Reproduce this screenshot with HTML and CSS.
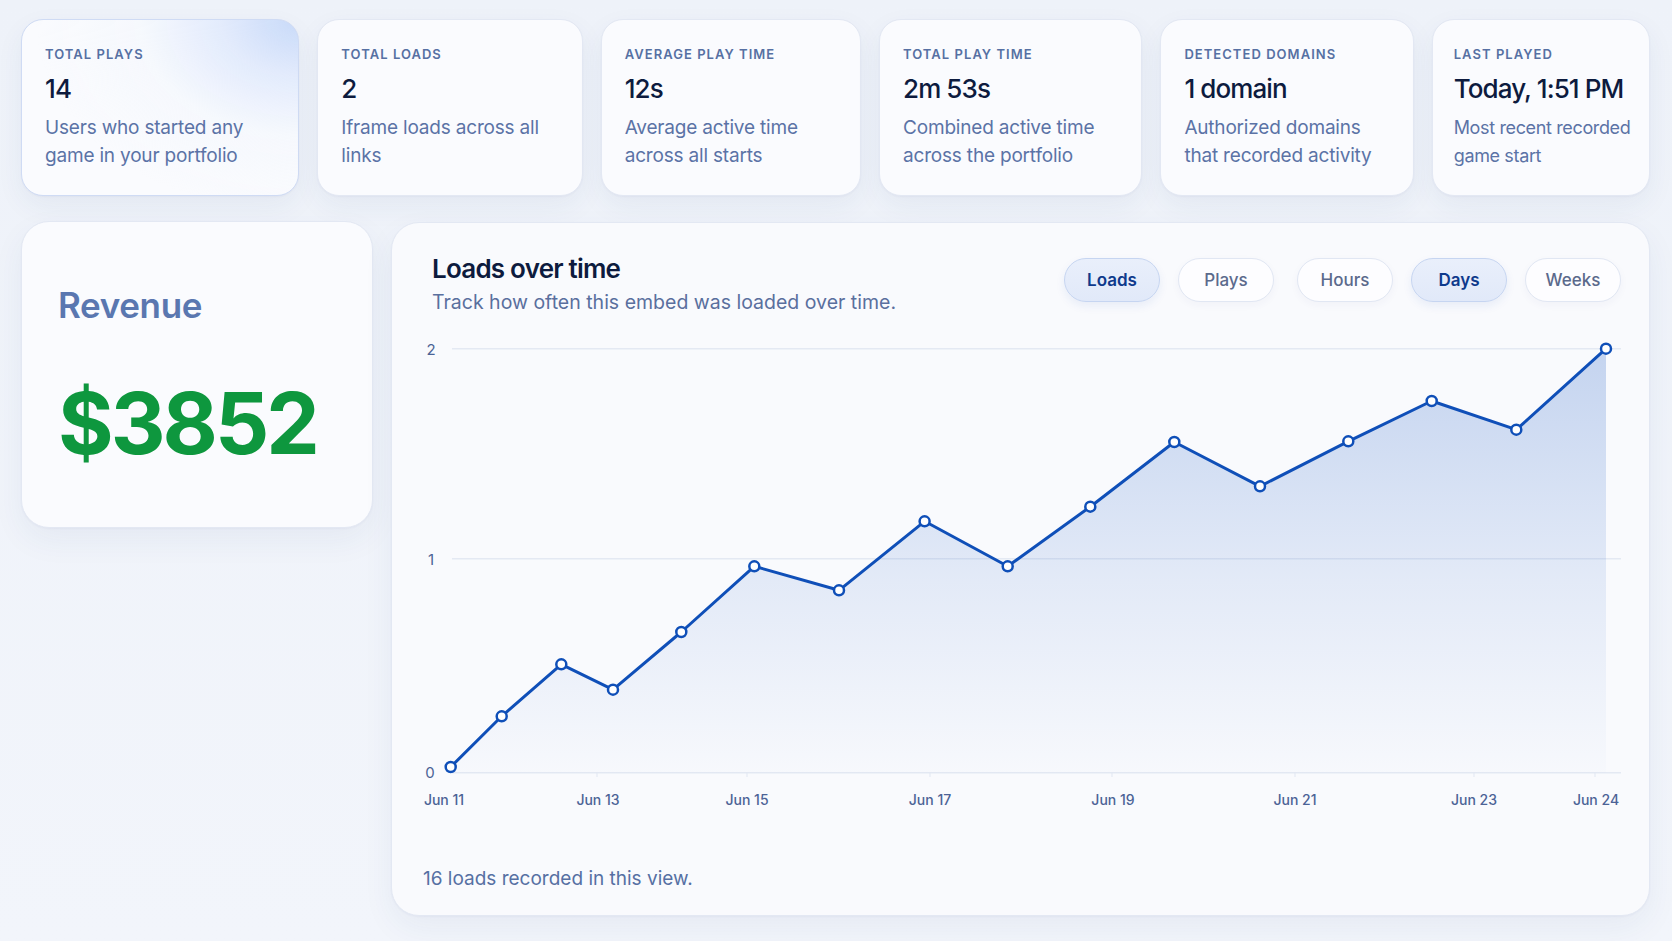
FILE: index.html
```html
<!DOCTYPE html>
<html lang="en">
<head>
    <meta charset="UTF-8">
    <meta name="viewport" content="width=device-width, initial-scale=1.0">
    <title>Portfolio Analytics</title>
    <link rel="stylesheet" href="styles.css">
</head>
<body>
    <main class="dashboard">
        <section class="stats">
            <article class="stat stat-featured">
                <p class="stat-label">Total plays</p>
                <p class="stat-value">14</p>
                <p class="stat-note">Users who started any<br>game in your portfolio</p>
            </article>
            <article class="stat">
                <p class="stat-label">Total loads</p>
                <p class="stat-value">2</p>
                <p class="stat-note">Iframe loads across all<br>links</p>
            </article>
            <article class="stat">
                <p class="stat-label">Average play time</p>
                <p class="stat-value">12s</p>
                <p class="stat-note">Average active time<br>across all starts</p>
            </article>
            <article class="stat">
                <p class="stat-label">Total play time</p>
                <p class="stat-value">2m 53s</p>
                <p class="stat-note">Combined active time<br>across the portfolio</p>
            </article>
            <article class="stat">
                <p class="stat-label">Detected domains</p>
                <p class="stat-value">1 domain</p>
                <p class="stat-note">Authorized domains<br>that recorded activity</p>
            </article>
            <article class="stat stat-narrow">
                <p class="stat-label">Last played</p>
                <p class="stat-value">Today, 1:51 PM</p>
                <p class="stat-note">Most recent recorded<br>game start</p>
            </article>
        </section>

        <section class="panels">
            <article class="revenue">
                <h2 class="revenue-title">Revenue</h2>
                <p class="revenue-amount">$3852</p>
            </article>

            <article class="chart-card">
                <header class="chart-head">
                    <div class="chart-titles">
                        <h2>Loads over time</h2>
                        <p>Track how often this embed was loaded over time.</p>
                    </div>
                    <div class="toggles">
                        <div class="toggle-group">
                            <button class="pill is-active">Loads</button>
                            <button class="pill">Plays</button>
                        </div>
                        <div class="toggle-group">
                            <button class="pill">Hours</button>
                            <button class="pill is-active">Days</button>
                            <button class="pill">Weeks</button>
                        </div>
                    </div>
                </header>

                <svg class="chart" viewBox="0 0 1198 485" width="1198" height="485">
                    <defs>
                        <linearGradient id="areaFill" x1="0" y1="0" x2="0" y2="1">
                            <stop offset="0%" stop-color="#1d5bc4" stop-opacity="0.24" />
                            <stop offset="55%" stop-color="#1d5bc4" stop-opacity="0.1" />
                            <stop offset="100%" stop-color="#1d5bc4" stop-opacity="0.01" />
                        </linearGradient>
                    </defs>

                    <!-- grid -->
                    <g class="grid">
                        <line x1="29" y1="17.7" x2="1198" y2="17.7" />
                        <line x1="29" y1="227.7" x2="1198" y2="227.7" />
                        <line x1="29" y1="441.7" x2="1198" y2="441.7" />
                    </g>
                    <g class="ticks">
                        <line x1="174" y1="441.7" x2="174" y2="446" />
                        <line x1="324" y1="441.7" x2="324" y2="446" />
                        <line x1="507" y1="441.7" x2="507" y2="446" />
                        <line x1="689" y1="441.7" x2="689" y2="446" />
                        <line x1="872" y1="441.7" x2="872" y2="446" />
                        <line x1="1051" y1="441.7" x2="1051" y2="446" />
                        <line x1="1172" y1="441.7" x2="1172" y2="446" />
                    </g>

                    <g class="y-labels">
                        <text x="8" y="24">2</text>
                        <text x="8" y="234">1</text>
                        <text x="7" y="447">0</text>
                    </g>
                    <g class="x-labels">
                        <text x="21" y="474">Jun 11</text>
                        <text x="175" y="474">Jun 13</text>
                        <text x="324" y="474">Jun 15</text>
                        <text x="507" y="474">Jun 17</text>
                        <text x="690" y="474">Jun 19</text>
                        <text x="872" y="474">Jun 21</text>
                        <text x="1051" y="474">Jun 23</text>
                        <text x="1173" y="474">Jun 24</text>
                    </g>

                    <path class="area" d="M27.7,441.7 L27.7,436 L78.7,385.3 L138.3,333.3 L190,358.7 L258.3,301 L331.3,235.3 L416,259.3 L501.6,190.3 L584.7,235.3 L667.3,175.7 L751.3,111 L837,155.3 L925.3,110.3 L1008.7,70 L1093.3,98.7 L1183,17.7 L1183,441.7 Z" />
                    <polyline class="line" points="27.7,436 78.7,385.3 138.3,333.3 190,358.7 258.3,301 331.3,235.3 416,259.3 501.6,190.3 584.7,235.3 667.3,175.7 751.3,111 837,155.3 925.3,110.3 1008.7,70 1093.3,98.7 1183,17.7" />

                    <g class="dots">
                        <circle cx="27.7" cy="436" r="5" />
                        <circle cx="78.7" cy="385.3" r="5" />
                        <circle cx="138.3" cy="333.3" r="5" />
                        <circle cx="190" cy="358.7" r="5" />
                        <circle cx="258.3" cy="301" r="5" />
                        <circle cx="331.3" cy="235.3" r="5" />
                        <circle cx="416" cy="259.3" r="5" />
                        <circle cx="501.6" cy="190.3" r="5" />
                        <circle cx="584.7" cy="235.3" r="5" />
                        <circle cx="667.3" cy="175.7" r="5" />
                        <circle cx="751.3" cy="111" r="5" />
                        <circle cx="837" cy="155.3" r="5" />
                        <circle cx="925.3" cy="110.3" r="5" />
                        <circle cx="1008.7" cy="70" r="5" />
                        <circle cx="1093.3" cy="98.7" r="5" />
                        <circle cx="1183" cy="17.7" r="5" />
                    </g>
                </svg>

                <p class="chart-foot">16 loads recorded in this view.</p>
            </article>
        </section>
    </main>
</body>
</html>
```

FILE: styles.css
```css
html, body {
    margin: 0;
    min-height: 100%;
}

body {
    font-family: Inter, "Noto Sans", sans-serif;
    background: linear-gradient(180deg, #eef2f9 0%, #f2f5fb 100%);
    color: #0d1b3e;
}

p, h2 {
    margin: 0;
}

.dashboard {
    padding: 19px 22px 27px 21px;
}

/* top row of summary cards */
.stats {
    display: grid;
    grid-template-columns: 278fr 265fr 260fr 263fr 253fr 218fr;
    gap: 18px;
}

.stat {
    background: #fafbfe;
    border: 1px solid #e3e8f3;
    border-radius: 22px;
    padding: 26px 20px 24px 23px;
    box-shadow: 0 10px 28px rgba(40, 62, 120, 0.06), 0 1px 2px rgba(40, 62, 120, 0.04);
}

/* first card carries a soft blue glow in its top-right corner */
.stat-featured {
    border-color: #cfdbf4;
    background:
        radial-gradient(ellipse 95% 110% at 100% 0%, rgba(200, 218, 249, 1) 0%, rgba(218, 229, 251, 0.7) 30%, rgba(240, 245, 253, 0.4) 60%, rgba(250, 251, 254, 0) 100%),
        #fafbfe;
}

.stat-narrow {
    padding-left: 21px;
    padding-right: 18px;
}

.stat-label {
    font-size: 13px;
    line-height: 16px;
    font-weight: 600;
    letter-spacing: 0.08em;
    text-transform: uppercase;
    color: #5670a3;
}

.stat-value {
    margin-top: 11px;
    font-size: 26px;
    line-height: 32px;
    font-weight: 500;
    letter-spacing: -0.035em;
    color: #0d1b3e;
    white-space: nowrap;
}

.stat-note {
    margin-top: 8.5px;
    font-size: 19px;
    line-height: 28.5px;
    font-weight: 400;
    letter-spacing: -0.01em;
    color: #5b73a6;
    white-space: nowrap;
}

.stat-narrow .stat-note {
    font-size: 18px;
    letter-spacing: -0.02em;
}

/* lower row: revenue + chart */
.panels {
    display: grid;
    grid-template-columns: 352px 1fr;
    gap: 18px;
    margin-top: 25px;
    align-items: start;
}

.revenue {
    background: #fafbfe;
    border: 1px solid #e3e8f3;
    border-radius: 28px;
    padding: 63px 36px 59px;
    box-shadow: 0 12px 32px rgba(40, 62, 120, 0.06), 0 1px 2px rgba(40, 62, 120, 0.04);
}

.revenue-title {
    font-size: 35px;
    line-height: 41px;
    font-weight: 600;
    letter-spacing: -0.01em;
    color: #5a77b0;
}

.revenue-amount {
    margin-top: 53px;
    font-size: 85px;
    line-height: 89px;
    font-weight: 700;
    letter-spacing: -0.035em;
    color: #0e973e;
}

.chart-card {
    background: #f9fafd;
    border: 1px solid #e3e8f3;
    border-radius: 28px;
    padding: 30px 28px 23px 31px;
    margin-top: 1px;
    box-shadow: 0 12px 32px rgba(40, 62, 120, 0.06), 0 1px 2px rgba(40, 62, 120, 0.04);
}

.chart-head {
    display: flex;
    justify-content: space-between;
    align-items: flex-start;
    padding-left: 9px;
}

.chart-titles h2 {
    font-size: 26px;
    line-height: 32px;
    font-weight: 600;
    letter-spacing: -0.03em;
    color: #0d1b3e;
}

.chart-titles p {
    margin-top: 4px;
    font-size: 19.5px;
    line-height: 27px;
    color: #5a6f9e;
}

.toggles {
    display: flex;
    gap: 23px;
    margin-top: 5px;
}

.toggle-group {
    display: flex;
    gap: 18px;
}

.pill {
    width: 96px;
    height: 44px;
    border-radius: 22px;
    border: 1px solid #e1e7f3;
    background: #fdfdff;
    font-family: inherit;
    font-size: 17px;
    font-weight: 500;
    color: #5b6a8c;
    box-shadow: 0 3px 8px rgba(40, 62, 120, 0.04);
    cursor: pointer;
}

.pill.is-active {
    background: linear-gradient(180deg, #e9effb, #e1e9f9);
    border-color: #c6d5f1;
    color: #0f3a8c;
    font-weight: 600;
    box-shadow: 0 4px 10px rgba(30, 80, 180, 0.08);
}

.chart {
    display: block;
    margin-top: 15px;
    width: 100%;
    height: auto;
    overflow: visible;
}

.chart .grid line {
    stroke: #e4e9f3;
    stroke-width: 1.5;
}

.chart .ticks line {
    stroke: #e1e7f2;
    stroke-width: 1;
}

.chart text {
    font-family: Inter, "Noto Sans", sans-serif;
    fill: #4c6396;
}

.y-labels text {
    font-size: 15px;
    text-anchor: middle;
}

.x-labels text {
    font-size: 14px;
    font-weight: 500;
    text-anchor: middle;
}

.chart .area {
    fill: url(#areaFill);
}

.chart .line {
    fill: none;
    stroke: #0f4fb8;
    stroke-width: 3;
    stroke-linejoin: round;
    stroke-linecap: round;
}

.chart .dots circle {
    fill: #ffffff;
    stroke: #0f4fb8;
    stroke-width: 2.5;
}

.chart-foot {
    margin-top: 50px;
    font-size: 19px;
    line-height: 26px;
    color: #5670a3;
}
```
